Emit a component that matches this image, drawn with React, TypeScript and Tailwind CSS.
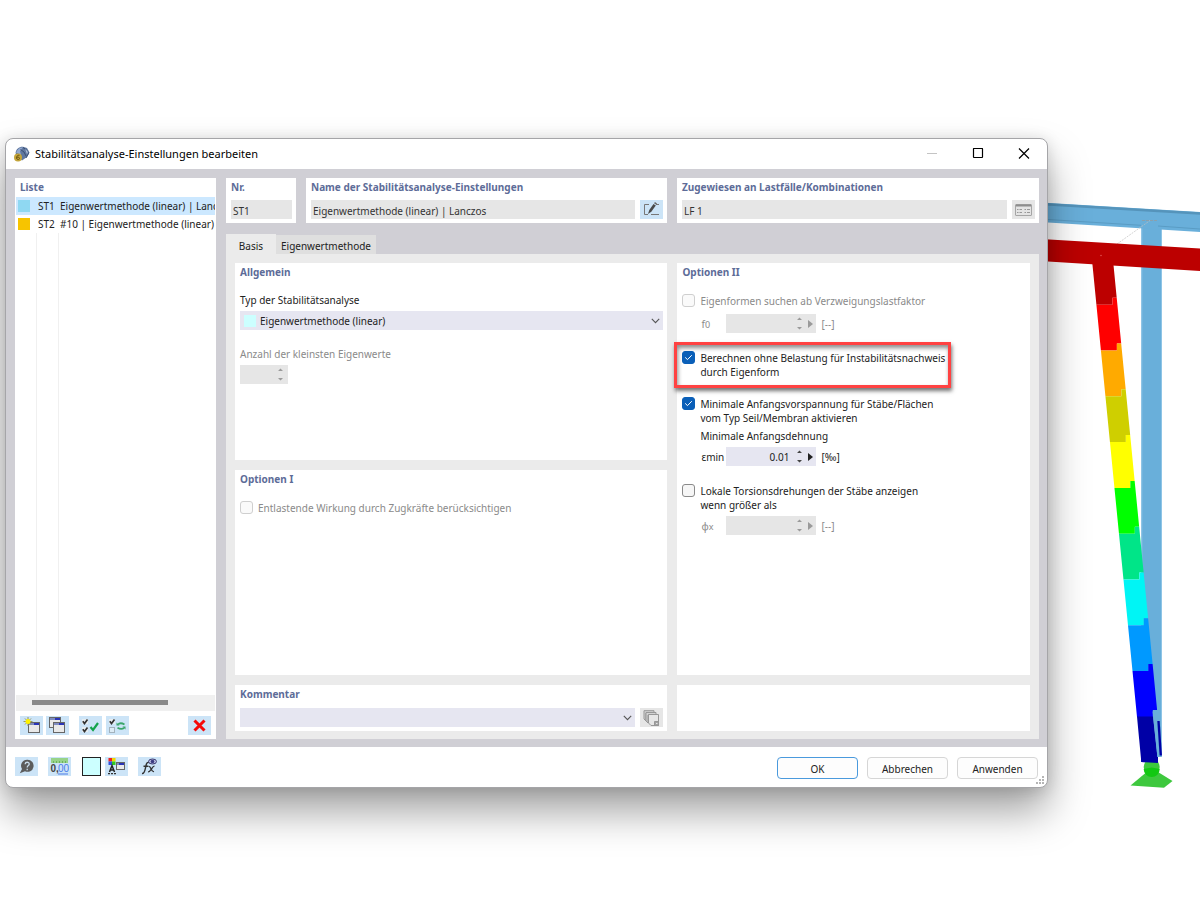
import type { ReactNode } from 'react';

const LEG_COLORS = [
  '#bc0000', '#ff0000', '#ffaa00', '#cfcf00', '#ffff00', '#00ff00',
  '#00e588', '#00f5f5', '#0099ff', '#0000ff',
];

const STEP = 45.8;
const leftEdge = (y: number) => 1092.5 + (y - 265) * 0.0985;
const rightEdge = (y: number) => 1113.5 + (y - 265) * 0.098;

function legSegment(index: number) {
  const bottom = 304.7 + index * STEP;
  const top = index === 0 ? 262 : bottom - STEP;
  const points = [
    [leftEdge(top), top],
    [rightEdge(top) - 5, top],
    [rightEdge(top) - 5, top - 7],
    [rightEdge(top - 7), top - 7],
    [rightEdge(bottom - 7), bottom - 7],
    [rightEdge(bottom) - 5, bottom - 7],
    [rightEdge(bottom) - 5, bottom],
    [leftEdge(bottom), bottom],
  ];
  return points.map((p) => p.join(',')).join(' ');
}

function Structure() {
  return (
    <svg
      className="absolute top-0 right-0"
      width="200"
      height="900"
      viewBox="1000 0 200 900"
      aria-hidden="true"
    >
      <rect x="1141.3" y="222" width="20.7" height="535" fill="#69afda" />
      <path d="M1141.8 222V640M1161.5 222V757" stroke="#8dc4e6" strokeWidth="1" />
      <polygon points="1000,200 1200,212 1200,232 1000,219.5" fill="#69afda" />
      <path d="M1000 201.5L1200 213.5" stroke="#5594bb" strokeWidth="2.4" />
      <path d="M1000 216.5L1141 225.3M1158 226L1200 229" stroke="#5a9cc4" strokeWidth="1" />
      <path d="M1141 224H1158" stroke="#69afda" strokeWidth="4" />
      <path d="M1117 244L1150 220.5" stroke="#c2c2c2" strokeWidth="0.7" strokeDasharray="2 1" />
      <path d="M1142 220.5H1157" stroke="#9a9a9a" strokeWidth="0.7" strokeDasharray="3 1" />
      {LEG_COLORS.map((color, i) => (
        <polygon key={color} points={legSegment(i)} fill={color} />
      ))}
      <polygon points="1137,716.5 1153,716.5 1158,763 1141.3,762" fill="#0000a6" />
      <polygon points="1152.6,711.5 1157,711.5 1161.5,757 1157.5,757" fill="#69afda" />
      <path d="M1158.5 721L1160.8 755.5" stroke="#0000a6" strokeWidth="2.4" />
      <polygon points="1000,236.5 1200,248.6 1200,271 1000,258.5" fill="#bc0000" />
      <circle cx="1101" cy="255.5" r="0.8" fill="#e05050" />
      <polygon points="1130.5,785.5 1151.5,768 1172.5,781 1164,787.8" fill="#3ec83e" />
      <circle cx="1151.7" cy="767" r="8" fill="#3ec83e" />
      <path d="M1143.700 769L1151.700 767.500L1159.700 769A8 8 0 0 1 1143.700 769Z" fill="#12c812" />
      <path d="M1141.3 762L1158 763L1158 757L1141 757Z" fill="#0000a6" />
    </svg>
  );
}

function Card({ title, className = '', children }: { title?: string; className?: string; children?: ReactNode }) {
  return (
    <section className={`flex flex-col bg-white pt-0.5 pr-1 pb-1 pl-[5px] ${className}`}>
      {title && <h2 className="font-bold text-[#5d6c98]">{title}</h2>}
      {children}
    </section>
  );
}

function IconButton({ label, disabled, children }: { label: string; disabled?: boolean; children: ReactNode }) {
  return (
    <button
      type="button"
      aria-label={label}
      disabled={disabled}
      className={`flex h-[19px] w-[23px] shrink-0 items-center justify-center ${disabled ? 'bg-[#e6e6e6]' : 'bg-[#cce4f7]'}`}
    >
      {children}
    </button>
  );
}

function TextField({ label, value }: { label: string; value: string }) {
  return (
    <input
      aria-label={label}
      defaultValue={value}
      readOnly
      className="h-[19px] w-full min-w-0 flex-1 bg-[#e6e6e6] px-0.5 pt-0.5 text-[#333] outline-none"
    />
  );
}

function Chevron() {
  return (
    <svg className="pointer-events-none col-start-1 row-start-1 mr-[3px] justify-self-end" width="9" height="6" viewBox="0 0 9 6" aria-hidden="true">
      <path d="M0.8 0.8L4.5 4.6L8.2 0.8" fill="none" stroke="#555" strokeWidth="1.1" />
    </svg>
  );
}

function SpinArrows({ disabled }: { disabled?: boolean }) {
  return (
    <svg width="5" height="13" viewBox="0 0 5 13" fill={disabled ? '#9a9a9a' : '#444'} aria-hidden="true">
      <path d="M0 3L2.5 0.5L5 3ZM0 10L2.5 12.5L5 10Z" />
    </svg>
  );
}

function Quantity({ symbol, sub, name, unit, value = '', disabled, className = '' }: {
  symbol: string; sub: string; name: string; unit: string; value?: string; disabled?: boolean; className?: string;
}) {
  return (
    <div className={`ml-[19px] flex items-center ${disabled ? 'text-[#8a8a8a]' : 'text-[#222]'} ${className}`}>
      <label htmlFor={name} className="w-[25px] shrink-0 pt-px whitespace-nowrap">
        {symbol}
        <span className={sub === 'min' ? '' : 'text-[9px]'}>{sub}</span>
      </label>
      <div className={`flex h-[19px] w-[90px] items-center gap-2 pr-[3px] ${disabled ? 'bg-[#e6e6e6]' : 'bg-[#e6e6f1]'}`}>
        <input id={name} defaultValue={value} disabled={disabled} className="w-full min-w-0 flex-1 text-right outline-none" />
        <SpinArrows disabled={disabled} />
        <svg className="-ml-0.5" width="5" height="8" viewBox="0 0 5 8" fill={disabled ? '#9a9a9a' : '#222'} aria-hidden="true">
          <path d="M0 0L5 4L0 8Z" />
        </svg>
      </div>
      <span className="ml-[5px] pt-px">{unit}</span>
    </div>
  );
}

function CheckOption({ checked, disabled, className = '', children }: {
  checked?: boolean; disabled?: boolean; className?: string; children: ReactNode;
}) {
  return (
    <label className={`flex items-start gap-[5px] ${disabled ? 'text-[#8a8a8a]' : 'text-[#222]'} ${className}`}>
      <span className="grid shrink-0 place-items-center">
        <input
          type="checkbox"
          defaultChecked={checked}
          disabled={disabled}
          className="peer col-start-1 row-start-1 size-[13px] appearance-none rounded-[3px] border border-[#8a8a8a] bg-[#f6f6f6] checked:border-[#0a5fb8] checked:bg-[#0a5fb8] disabled:border-[#cfcfcf] disabled:bg-[#fafafa]"
        />
        <svg className="pointer-events-none invisible col-start-1 row-start-1 peer-checked:visible" width="9" height="7" viewBox="0 0 9 7" aria-hidden="true">
          <path d="M1.2 3.4L3.5 5.6L7.8 1.2" fill="none" stroke="#fff" strokeWidth="1" />
        </svg>
      </span>
      <span>{children}</span>
    </label>
  );
}

function WindowGlyph({ x, y, w = 11, h = 10 }: { x: number; y: number; w?: number; h?: number }) {
  return (
    <g>
      <rect x={x + 0.5} y={y + 0.5} width={w - 1} height={h - 1} fill="#e9e9e9" stroke="#666" />
      <rect x={x + 1} y={y + 1} width={w - 2} height="2" fill="#7f8cc0" />
      <rect x={x + w - 6} y={y + 1} width="5" height="2" fill="#2a35b8" />
    </g>
  );
}

function AppIcon() {
  return (
    <svg width="16" height="16" viewBox="0 0 16 16" aria-hidden="true">
      <path d="M1.500 7C2 3 5 0.500 9 0.700L13 2L15.500 6.500L13 11L8 14.500L3 10Z" fill="#5f779f" />
      <path d="M2 6.500C3.500 3 6 1.200 9 1.500L6 5L7 9Z" fill="#93a9cf" />
      <path d="M9 1.500L12.500 4L14.500 7.500L12 12M6.500 3.500L10 6L12 10" fill="none" stroke="#34486e" strokeWidth="0.9" />
      <path d="M11 2.500L14 6L13 8Z" fill="#b3c3e0" />
      <circle cx="4" cy="11.500" r="4" fill="#c4a53a" />
      <path d="M5.500 9.300C3.500 8.800 2.500 10.500 2.600 12C2.700 14 5.500 14 5.500 12.400C5.500 10.900 3.400 10.900 2.700 12" fill="none" stroke="#6b5410" strokeWidth="1" />
    </svg>
  );
}

function RenameIcon() {
  return (
    <svg width="17" height="15" viewBox="0 0 17 15" aria-hidden="true">
      <path d="M6 2.500H1.500V12.500H5M8 12.500H16M13 2.500H16" fill="none" stroke="#777" />
      <path d="M5 12L6.300 8L10.500 2L12.800 3.600L8.300 9.800Z" fill="#4a4a4a" />
      <path d="M11 1.200L12 0L14 1.400L13.300 2.800Z" fill="#666" />
    </svg>
  );
}

function AssignIcon() {
  return (
    <svg width="17" height="12" viewBox="0 0 17 12" aria-hidden="true">
      <rect x="0.500" y="0.500" width="16" height="11" rx="0.500" fill="#e4e4e4" stroke="#a5a5a5" />
      <path d="M1 1.500H16" stroke="#8d8d8d" strokeWidth="2" />
      <path d="M2 5.500H3.500M4.500 5.500H7M9.500 5.500H11M12 5.500H15M2 8.500H3.500M4.500 8.500H7M9.500 8.500H11M12 8.500H15" stroke="#999" />
    </svg>
  );
}

function CommentIcon() {
  return (
    <svg width="17" height="16" viewBox="0 0 17 16" fill="#d2d2d2" stroke="#979797" aria-hidden="true">
      <path d="M1 0.700H11V3H3V11L1 9Z" />
      <path d="M3 2.500H13V5H5V13L3 11Z" />
      <path d="M5.500 4.500H15.500V15.500H8L5.500 13Z" fill="#e6e6e6" />
      <path d="M11.500 11.500H15.500V15.500H11.500Z" fill="#a2a2a2" />
      <path d="M13 13.500H14.500" stroke="#e6e6e6" />
    </svg>
  );
}

function NewIcon() {
  return (
    <svg width="17" height="17" viewBox="0 0 17 17" aria-hidden="true">
      <WindowGlyph x={5} y={5} w={12} h={11} />
      <path d="M5 0V9M0.500 4.500H9.500M2 1.500L8 7.500M8 1.500L2 7.500" stroke="#8d8d55" strokeWidth="0.9" />
      <circle cx="5" cy="4.500" r="2.500" fill="#fff200" />
    </svg>
  );
}

function CopyIcon() {
  return (
    <svg width="17" height="17" viewBox="0 0 17 17" aria-hidden="true">
      <WindowGlyph x={0} y={0} w={12} h={11} />
      <WindowGlyph x={4} y={5} w={12} h={11} />
    </svg>
  );
}

const TICK = 'M0.800 2.200L2.500 4.500L5.500 0.500';

function CheckAllIcon() {
  return (
    <svg width="17" height="16" viewBox="0 0 17 16" fill="none" aria-hidden="true">
      <rect x="0" y="1" width="6" height="5" fill="#e8eef2" />
      <rect x="0" y="9" width="6" height="5" fill="#e8eef2" />
      <path d={TICK} transform="translate(0 1)" stroke="#333" strokeWidth="1.700" />
      <path d={TICK} transform="translate(0 9)" stroke="#333" strokeWidth="1.700" />
      <path d="M8.500 9L11 12L16 5" stroke="#14a44d" strokeWidth="2.200" />
    </svg>
  );
}

function InvertIcon() {
  return (
    <svg width="17" height="16" viewBox="0 0 17 16" fill="none" aria-hidden="true">
      <rect x="0" y="1" width="6" height="5" fill="#e8eef2" />
      <path d={TICK} transform="translate(0 1)" stroke="#333" strokeWidth="1.700" />
      <rect x="0.500" y="9.500" width="5" height="5" fill="#dcebf5" stroke="#a3b2bd" />
      <path d="M9 6.500C10.500 4.800 13 5 15.500 6.500M15 10C13 11.500 11 11.200 8.500 9.800" stroke="#3aa66a" strokeWidth="1.800" />
      <path d="M7.500 4.500V7.500H10.500ZM16.500 11.500V8.500H13.500Z" fill="#3aa66a" />
    </svg>
  );
}

function DeleteIcon() {
  return (
    <svg width="13" height="13" viewBox="0 0 13 13" aria-hidden="true">
      <path d="M1.500 1.500L11.500 11.500M11.500 1.500L1.500 11.500" stroke="#f50a0a" strokeWidth="3" />
    </svg>
  );
}

function HelpIcon() {
  return (
    <svg width="15" height="15" viewBox="0 0 15 15" aria-hidden="true">
      <path d="M8.200 0.800A6 6 0 1 1 6 12.200L0.800 14.200L3 10A6 6 0 0 1 8.200 0.800Z" fill="#5c5c5c" />
      <path d="M6.200 5.200C6.300 2.500 10.300 2.700 10.200 5.100C10.100 6.700 8.200 6.600 8.200 8.600M8.200 9.700V11.200" fill="none" stroke="#c8dcec" strokeWidth="1.300" />
    </svg>
  );
}

function UnitsIcon() {
  return (
    <svg width="19" height="17" viewBox="0 0 19 17" aria-hidden="true">
      <rect x="1" y="0" width="17" height="5" fill="#97d389" />
      <path d="M3.500 3V5M6.500 3V5M9.500 3V5M12.500 3V5M15.500 3V5" stroke="#6cb05e" />
      <text x="0.500" y="14" fontSize="10" fontWeight="bold" fill="#444" fontFamily="Liberation Sans, sans-serif">0,</text>
      <text x="8" y="14" fontSize="10" fill="#4a7be8" fontFamily="Liberation Sans, sans-serif">00</text>
      <path d="M8 16H18" stroke="#4a7be8" strokeWidth="1" />
    </svg>
  );
}

function DisplayIcon() {
  return (
    <svg width="17" height="17" viewBox="0 0 17 17" aria-hidden="true">
      <rect x="0.500" y="0" width="3.500" height="3.500" fill="#f02020" />
      <rect x="4" y="0" width="3.500" height="3.500" fill="#f0d800" />
      <rect x="0.500" y="3.500" width="3.500" height="3.500" fill="#3050e0" />
      <rect x="4" y="3.500" width="3.500" height="3.500" fill="#30c820" />
      <path d="M1.500 14L4 7.500L6.500 14M2.500 12H6" fill="none" stroke="#222" strokeWidth="1.500" />
      <path d="M0 15.700H9" stroke="#333" strokeWidth="1.200" strokeDasharray="2 1" />
      <WindowGlyph x={8} y={4} w={9} h={8} />
    </svg>
  );
}

function FormulaIcon() {
  return (
    <svg width="17" height="17" viewBox="0 0 17 17" aria-hidden="true">
      <path d="M1 15.500C3.500 16 4 12 4.800 8.500C5.400 5.500 6 4 8 4.500M2.500 8.300H7.200" fill="none" stroke="#333" strokeWidth="1.400" />
      <path d="M7.500 8.500C10.500 7.500 9.500 14.500 13 13.500M13.500 8.200C11 8 10 14 7 13.800" fill="none" stroke="#333" strokeWidth="1.300" />
      <ellipse cx="11.500" cy="3.500" rx="4" ry="2.500" fill="#b9bce0" stroke="#3a3a70" strokeWidth="1" />
      <circle cx="11.500" cy="3.500" r="1.800" fill="#3a3a80" />
    </svg>
  );
}

function ListPanel() {
  const rows = [
    { id: 'ST1', name: 'Eigenwertmethode (linear) | Lanczos', active: true },
    { id: 'ST2', name: '#10 | Eigenwertmethode (linear) | Lanczos', active: false },
  ];
  return (
    <section className="flex w-[201px] shrink-0 flex-col bg-white px-px">
      <h2 className="mb-[3px] pt-0.5 pl-1 font-bold text-[#5d6c98]">Liste</h2>
      <div className="flex-1">
        <table className="h-full w-full table-fixed border-collapse text-[#222]" aria-label="Liste">
          <colgroup>
            <col className="w-5" />
            <col className="w-[22px]" />
            <col />
          </colgroup>
          <tbody>
            {rows.map((row) => (
              <tr key={row.id} className={row.active ? 'h-[18px] bg-[#cce8ff]' : 'h-[18px]'}>
                <td className="p-0 pl-0.5">
                  <span className={row.active ? 'block size-3 bg-[#8fd8f2]' : 'block size-3 bg-[#f7c400]'} />
                </td>
                <td className="p-0 pl-0.5 whitespace-nowrap">{row.id}</td>
                <td className="overflow-hidden p-0 pl-0.5 whitespace-nowrap">{row.name}</td>
              </tr>
            ))}
            <tr>
              <td className="border-r border-[#f0f0f0]" />
              <td className="border-r border-[#f0f0f0]" />
              <td />
            </tr>
          </tbody>
        </table>
      </div>
      <div className="h-4 bg-[#f0f0f0] pt-[5px] pl-4">
        <div className="h-[5px] w-[136px] bg-[#8a8a8a]" />
      </div>
      <div className="flex items-center gap-[3px] px-1 pt-[5px] pb-1">
        <IconButton label="Neu"><NewIcon /></IconButton>
        <IconButton label="Kopieren"><CopyIcon /></IconButton>
        <div className="ml-[7px] flex gap-1">
          <IconButton label="Alle auswählen"><CheckAllIcon /></IconButton>
          <IconButton label="Auswahl umkehren"><InvertIcon /></IconButton>
        </div>
        <div className="ml-auto">
          <IconButton label="Löschen"><DeleteIcon /></IconButton>
        </div>
      </div>
    </section>
  );
}

function DialogButton({ primary, children }: { primary?: boolean; children: ReactNode }) {
  return (
    <button
      type="button"
      className={`h-[22px] w-[81px] rounded border pt-0.5 text-[#222] ${primary ? 'border-[#4a9add] bg-[#fdfdfd]' : 'border-[#d6d6d6] bg-[#fdfdfd]'}`}
    >
      {children}
    </button>
  );
}

export default function App() {
  return (
    <main className="relative min-h-screen overflow-hidden bg-white pt-[138px] pr-[152px] pb-28 pl-[5px] font-['Noto_Sans','Open_Sans',sans-serif] text-[10px] leading-[14px]">
      <Structure />
      <div
        role="dialog"
        aria-labelledby="dialog-title"
        className="relative flex flex-col overflow-hidden rounded-lg border border-[#a5a5a8] bg-white shadow-[0_24px_40px_rgba(0,0,0,0.36),0_2px_16px_rgba(0,0,0,0.14)]"
      >
        <header className="flex h-[30px] items-center pr-[17px] pl-2">
          <AppIcon />
          <h1 id="dialog-title" className="ml-[5px] flex-1 text-[11px] text-black">
            Stabilitätsanalyse-Einstellungen bearbeiten
          </h1>
          <div className="flex items-center gap-[34px]">
            <button type="button" aria-label="Minimieren" disabled>
              <svg width="12" height="12" viewBox="0 0 12 12"><path d="M1 5.500H11" stroke="#c4c4c4" /></svg>
            </button>
            <button type="button" aria-label="Maximieren">
              <svg width="12" height="12" viewBox="0 0 12 12"><rect x="1.500" y="0.500" width="9" height="9" rx="0.500" fill="none" stroke="#000" strokeWidth="1.200" /></svg>
            </button>
            <button type="button" aria-label="Schließen">
              <svg width="12" height="12" viewBox="0 0 12 12"><path d="M1 0.500L11 10.500M11 0.500L1 10.500" stroke="#000" strokeWidth="1.200" /></svg>
            </button>
          </div>
        </header>

        <div className="flex gap-[10px] bg-[#d0cfd5] pt-[9px] pr-2 pb-2 pl-[9px]">
          <ListPanel />

          <div className="flex min-w-0 flex-1 flex-col">
            <div className="grid grid-cols-[441fr_362fr] gap-[10px]">
              <div className="flex gap-[10px]">
                <Card title="Nr." className="w-[70px] shrink-0">
                  <div className="mt-1.5 flex"><TextField label="Nr." value="ST1" /></div>
                </Card>
                <Card title="Name der Stabilitätsanalyse-Einstellungen" className="min-w-0 flex-1">
                  <div className="mt-1.5 flex gap-[5px]">
                    <TextField label="Name der Stabilitätsanalyse-Einstellungen" value="Eigenwertmethode (linear) | Lanczos" />
                    <IconButton label="Namen bearbeiten"><RenameIcon /></IconButton>
                  </div>
                </Card>
              </div>
              <Card title="Zugewiesen an Lastfälle/Kombinationen">
                <div className="mt-1.5 flex gap-[5px]">
                  <TextField label="Zugewiesen an Lastfälle/Kombinationen" value="LF 1" />
                  <IconButton label="Zuweisen" disabled><AssignIcon /></IconButton>
                </div>
              </Card>
            </div>

            <div role="tablist" className="mt-[11px] flex items-end text-[#222]">
              <button type="button" role="tab" aria-selected="true" className="h-5 w-[50px] bg-[#ebebeb] pt-1">Basis</button>
              <button type="button" role="tab" aria-selected="false" className="h-[19px] w-[100px] bg-[#dfdfdf] pt-[3px]">Eigenwertmethode</button>
            </div>

            <div role="tabpanel" className="grid flex-1 grid-cols-[433fr_353fr] grid-rows-[197px_205px_auto] gap-[10px] bg-[#ebebeb] p-[9px] pb-2">
              <Card title="Allgemein">
                <label htmlFor="analysis-type" className="mt-3.5 text-[#222]">Typ der Stabilitätsanalyse</label>
                <div className="mt-1 grid items-center">
                  <select id="analysis-type" className="col-start-1 row-start-1 h-[19px] appearance-none bg-[#e6e6f1] pl-5 text-[#222] outline-none">
                    <option>Eigenwertmethode (linear)</option>
                  </select>
                  <span className="pointer-events-none col-start-1 row-start-1 ml-1 size-3 bg-[#ccffff]" />
                  <Chevron />
                </div>
                <label htmlFor="eigen-count" className="mt-[17px] text-[#8a8a8a]">Anzahl der kleinsten Eigenwerte</label>
                <div className="mt-1 flex h-[19px] w-12 items-center bg-[#e6e6e6] pr-[5px]">
                  <input id="eigen-count" disabled className="w-full min-w-0 flex-1" />
                  <SpinArrows disabled />
                </div>
              </Card>

              <Card title="Optionen II" className="row-span-2">
                <CheckOption disabled className="mt-[15px]">Eigenformen suchen ab Verzweigungslastfaktor</CheckOption>
                <Quantity symbol="f" sub="0" name="f0" unit="[--]" disabled className="mt-1.5" />
                <div className="relative mt-[18px]">
                  <CheckOption checked>
                    Berechnen ohne Belastung für Instabilitätsnachweis
                    <br />
                    durch Eigenform
                  </CheckOption>
                  <div className="pointer-events-none absolute -top-[9px] -bottom-[9px] -left-2 w-[277px] border-3 border-[#ff4242] shadow-[1px_3px_4px_rgba(0,0,0,0.55),inset_1px_3px_4px_rgba(0,0,0,0.45)]" />
                </div>
                <CheckOption checked className="mt-[18px]">
                  Minimale Anfangsvorspannung für Stäbe/Flächen
                  <br />
                  vom Typ Seil/Membran aktivieren
                </CheckOption>
                <p className="mt-1 ml-[18px] text-[#222]">Minimale Anfangsdehnung</p>
                <Quantity symbol="ε" sub="min" name="eps-min" unit="[‰]" value="0.01" className="mt-1" />
                <CheckOption className="mt-[18px]">
                  Lokale Torsionsdrehungen der Stäbe anzeigen
                  <br />
                  wenn größer als
                </CheckOption>
                <Quantity symbol="φ" sub="x" name="phi-x" unit="[--]" disabled className="mt-1" />
              </Card>

              <Card title="Optionen I">
                <CheckOption disabled className="mt-[15px]">Entlastende Wirkung durch Zugkräfte berücksichtigen</CheckOption>
              </Card>

              <Card title="Kommentar">
                <div className="mt-[7px] flex gap-[5px]">
                  <div className="grid flex-1 items-center">
                    <select aria-label="Kommentar" className="col-start-1 row-start-1 h-[19px] appearance-none bg-[#e6e6f1] outline-none">
                      <option></option>
                    </select>
                    <Chevron />
                  </div>
                  <IconButton label="Kommentar übernehmen" disabled><CommentIcon /></IconButton>
                </div>
              </Card>

              <Card />
            </div>
          </div>
        </div>

        <footer className="flex h-10 items-start pt-[10px] pr-[9px] pl-[9px]">
          <IconButton label="Hilfe"><HelpIcon /></IconButton>
          <div className="ml-[10px]"><IconButton label="Einheiten und Dezimalstellen"><UnitsIcon /></IconButton></div>
          <button type="button" aria-label="Farbe" className="ml-[11px] size-[19px] border border-[#222] bg-[#ccffff]" />
          <div className="ml-1"><IconButton label="Darstellung"><DisplayIcon /></IconButton></div>
          <div className="ml-[10px]"><IconButton label="Formeln"><FormulaIcon /></IconButton></div>
          <div className="ml-auto flex gap-[9px]">
            <DialogButton primary>OK</DialogButton>
            <DialogButton>Abbrechen</DialogButton>
            <DialogButton>Anwenden</DialogButton>
          </div>
        </footer>
        <svg className="absolute right-0.5 bottom-0.5" width="9" height="9" viewBox="0 0 9 9" fill="#b5b5b5" aria-hidden="true">
          <path d="M6 0H8V2H6ZM3 3H5V5H3ZM6 3H8V5H6ZM0 6H2V8H0ZM3 6H5V8H3ZM6 6H8V8H6Z" />
        </svg>
      </div>
    </main>
  );
}
